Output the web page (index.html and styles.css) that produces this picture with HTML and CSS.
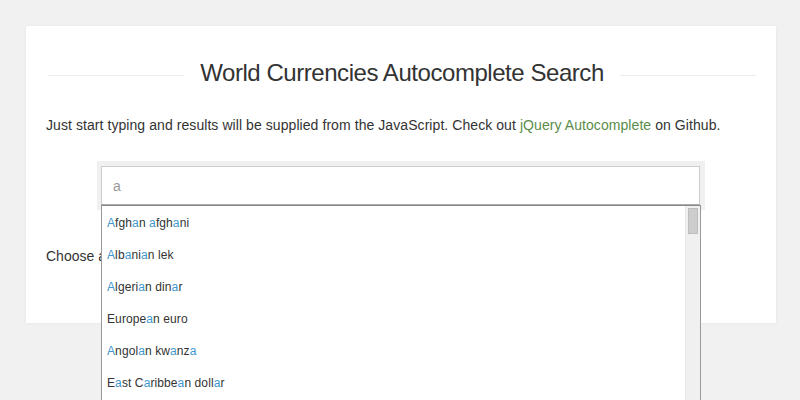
FILE: index.html
```html
<!DOCTYPE html>
<html>
<head>
<meta charset="utf-8">
<link rel="stylesheet" href="styles.css">
</head>
<body>
<div class="card">
  <h2 class="title"><span>World Currencies Autocomplete Search</span></h2>
  <p class="intro">Just start typing and results will be supplied from the JavaScript. Check out <a href="#">jQuery Autocomplete</a> on Github.</p>
  <div class="search">
    <div class="field">
      <input class="input" type="text" value="a">
      <div class="suggestions">
        <ul class="list">
          <li><b>A</b>fgh<b>a</b>n <b>a</b>fgh<b>a</b>ni</li>
          <li><b>A</b>lb<b>a</b>ni<b>a</b>n lek</li>
          <li><b>A</b>lgeri<b>a</b>n din<b>a</b>r</li>
          <li>Europe<b>a</b>n euro</li>
          <li><b>A</b>ngol<b>a</b>n kw<b>a</b>nz<b>a</b></li>
          <li>E<b>a</b>st C<b>a</b>ribbe<b>a</b>n doll<b>a</b>r</li>
        </ul>
        <div class="scrollbar"><div class="thumb"></div></div>
      </div>
    </div>
  </div>
  <p class="choose">Choose a currency</p>
</div>
</body>
</html>
```
FILE: styles.css
```css
html, body {
  margin: 0;
  padding: 0;
}
body {
  background: #f1f1f1;
  font-family: "Liberation Sans", Arial, sans-serif;
  color: #333;
  height: 400px;
  overflow: hidden;
}
.card {
  margin: 26px 24px 0 26px;
  width: 750px;
  height: 297px;
  box-sizing: border-box;
  background: #fff;
  padding: 32px 20px 0 20px;
  box-shadow: 0 0 3px rgba(0,0,0,0.06);
}
.title {
  margin: 0;
  font-weight: normal;
  font-size: 24px;
  line-height: 30px;
  color: #333;
  display: flex;
  align-items: center;
  gap: 16px;
  padding-left: 2px;
  letter-spacing: -0.45px;
}
.title::before, .title::after {
  content: "";
  flex: 1;
  height: 1px;
  margin-top: 4px;
  background: #eee;
}
.intro {
  margin: 27px 0 0 0;
  font-size: 14px;
  line-height: 20px;
  letter-spacing: 0.07px;
}
.intro a {
  color: #5a8d4b;
  text-decoration: none;
}
.search {
  margin: 26px 0 0 51px;
  width: 608px;
  box-sizing: border-box;
  padding: 5px 5px 5px 4px;
  background: #f0f0f0;
  height: 49px;
}
.field {
  position: relative;
}
.input {
  display: block;
  width: 100%;
  height: 39px;
  box-sizing: border-box;
  border: 1px solid #ccc;
  border-bottom-color: #aaa;
  background: #fff;
  padding: 0 11px;
  font-family: "Liberation Sans", Arial, sans-serif;
  font-size: 14px;
  color: #999;
  outline: none;
  margin: 0;
}
.suggestions {
  position: absolute;
  left: 0;
  top: 39px;
  width: 600px;
  height: 196px;
  box-sizing: border-box;
  border: 1px solid #999;
  border-top: 1px solid #888;
  border-bottom: none;
  background: #fff;
  display: flex;
  z-index: 2;
}
.list {
  list-style: none;
  margin: 0;
  padding: 1px 0 0 0;
  flex: 1;
}
.list li {
  height: 32px;
  line-height: 32px;
  padding-left: 5px;
  font-size: 12px;
  letter-spacing: 0.1px;
  color: #333;
  white-space: nowrap;
}
.list b {
  font-weight: normal;
  color: #3d97d1;
}
.scrollbar {
  width: 15px;
  background: #f0f0f0;
  border-left: 1px solid #e8e8e8;
  padding: 2px 2px 0 2px;
  box-sizing: border-box;
}
.thumb {
  height: 26px;
  background: #cdcdcd;
  border: 1px solid #bdbdbd;
  box-sizing: border-box;
}
.choose {
  margin: 36px 0 0 0;
  font-size: 14px;
  line-height: 20px;
}
```
